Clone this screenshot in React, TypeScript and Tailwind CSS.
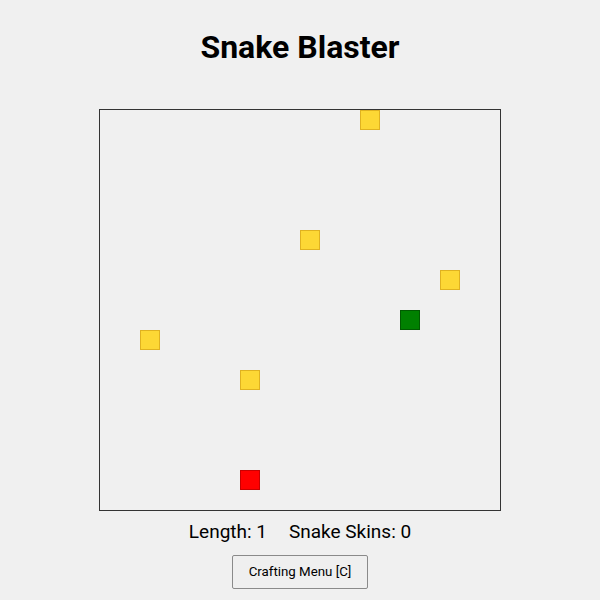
import React from 'react';

type Cell = { x: number; y: number; kind: 'food' | 'head' | 'enemy' };

const CELL = 20;

const cells: Cell[] = [
  { x: 13, y: 0, kind: 'food' },
  { x: 10, y: 6, kind: 'food' },
  { x: 17, y: 8, kind: 'food' },
  { x: 15, y: 10, kind: 'head' },
  { x: 2, y: 11, kind: 'food' },
  { x: 7, y: 13, kind: 'food' },
  { x: 7, y: 18, kind: 'enemy' },
];

const kindClass: Record<Cell['kind'], string> = {
  food: 'bg-[#fdd835] border-[#e0b220]',
  head: 'bg-[#008000] border-[#005a00]',
  enemy: 'bg-[#ff0000] border-[#c80000]',
};

const App: React.FC = () => {
  return (
    <div className="min-h-screen bg-[#f0f0f0] flex flex-col items-center pt-[27px] font-['Roboto',sans-serif] text-black">
      <h1 className="text-[32px] leading-[40px] font-bold">Snake Blaster</h1>

      <div className="mt-[42px] w-[402px] h-[402px] border border-[#333]">
        <div className="relative w-[400px] h-[400px]">
          {cells.map((c, i) => (
            <div
              key={i}
              className={`absolute w-[20px] h-[20px] border ${kindClass[c.kind]}`}
              style={{ left: c.x * CELL, top: c.y * CELL }}
            />
          ))}
        </div>
      </div>

      <div className="mt-[9px] flex gap-[22px] text-[19px] leading-[24px]">
        <span>Length: 1</span>
        <span>Snake Skins: 0</span>
      </div>

      <button className="mt-[11px] w-[136px] h-[34px] border border-[#8a8a8a] rounded-[2px] bg-[#efefef] text-[13.3px]">
        Crafting Menu [C]
      </button>
    </div>
  );
};

export default App;
